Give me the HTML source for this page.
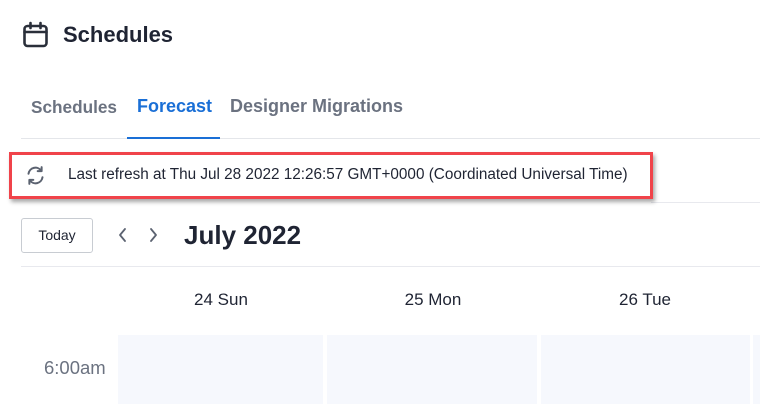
<!DOCTYPE html>
<html><head><style>
body{margin:0;width:760px;height:404px;background:#fff;font-family:"Liberation Sans",sans-serif;position:relative;overflow:hidden;color:#1f2433}
.a{position:absolute;white-space:nowrap}
</style></head><body>
<svg class="a" style="left:22px;top:21px" width="27" height="27" viewBox="0 0 27 27" fill="none" stroke="#2a2f3a" stroke-width="2.6" stroke-linecap="round"><rect x="2.5" y="5" width="22" height="20" rx="3"/><line x1="2.5" y1="11" x2="24.5" y2="11"/><line x1="8.5" y1="2" x2="8.5" y2="7"/><line x1="18.5" y1="2" x2="18.5" y2="7"/></svg>
<div class="a" style="left:63px;top:22px;font-size:22px;font-weight:bold;color:#1f2433">Schedules</div>
<div class="a" style="left:31px;top:97px;font-size:17.2px;font-weight:bold;color:#6b7280">Schedules</div>
<div class="a" style="left:137px;top:96px;font-size:18px;font-weight:bold;color:#1a6fd6">Forecast</div>
<div class="a" style="left:230px;top:96px;font-size:18px;font-weight:bold;color:#6b7280">Designer Migrations</div>
<div class="a" style="left:21px;top:138px;width:739px;height:1px;background:#e4e6ea"></div>
<div class="a" style="left:127px;top:137px;width:93px;height:2px;background:#1a6fd6"></div>
<div class="a" style="left:651px;top:202px;width:109px;height:1px;background:#e8e9ee"></div>
<div class="a" style="left:9px;top:152px;width:638px;height:41px;border:3px solid #f0434a;box-shadow:2px 3px 4px rgba(0,0,0,.35);background:#fff"></div>
<svg class="a" style="left:25px;top:165px" width="21" height="21" viewBox="0 0 24 24" fill="none" stroke="#5b6270" stroke-width="2.3" stroke-linecap="round" stroke-linejoin="round"><path d="M4 10a8 8 0 0 1 14.5-3.5"/><path d="M19 2.5v4.5h-4.5"/><path d="M20 14a8 8 0 0 1-14.5 3.5"/><path d="M5 21.5V17h4.5"/></svg>
<div class="a" style="left:68px;top:166px;font-size:15.3px;color:#1f2433">Last refresh at Thu Jul 28 2022 12:26:57 GMT+0000 (Coordinated Universal Time)</div>
<div class="a" style="left:21px;top:218px;width:70px;height:33px;border:1px solid #c8ccd2;border-radius:3px;font-size:14px;line-height:33px;text-align:center">Today</div>
<svg class="a" style="left:116px;top:226px" width="12" height="18" viewBox="0 0 12 18" fill="none" stroke="#5b6270" stroke-width="1.8" stroke-linecap="round" stroke-linejoin="round"><path d="M9 3L4 9l5 6"/></svg>
<svg class="a" style="left:148px;top:226px" width="12" height="18" viewBox="0 0 12 18" fill="none" stroke="#5b6270" stroke-width="1.8" stroke-linecap="round" stroke-linejoin="round"><path d="M3 3l5 6-5 6"/></svg>
<div class="a" style="left:184px;top:220px;font-size:26px;font-weight:bold;color:#1f2433">July 2022</div>
<div class="a" style="left:21px;top:266px;width:739px;height:1px;background:#e8e9ee"></div>
<div class="a" style="left:121px;top:290px;width:200px;text-align:center;font-size:17px">24 Sun</div>
<div class="a" style="left:333px;top:290px;width:200px;text-align:center;font-size:17px">25 Mon</div>
<div class="a" style="left:545px;top:290px;width:200px;text-align:center;font-size:17px">26 Tue</div>
<div class="a" style="left:118px;top:335px;width:205px;height:69px;background:#f6f8fd"></div>
<div class="a" style="left:327px;top:335px;width:210px;height:69px;background:#f6f8fd"></div>
<div class="a" style="left:541px;top:335px;width:209px;height:69px;background:#f6f8fd"></div>
<div class="a" style="left:753px;top:335px;width:7px;height:69px;background:#f6f8fd"></div>
<div class="a" style="left:44px;top:357px;font-size:18.5px;color:#6b7280">6:00am</div>
</body></html>
